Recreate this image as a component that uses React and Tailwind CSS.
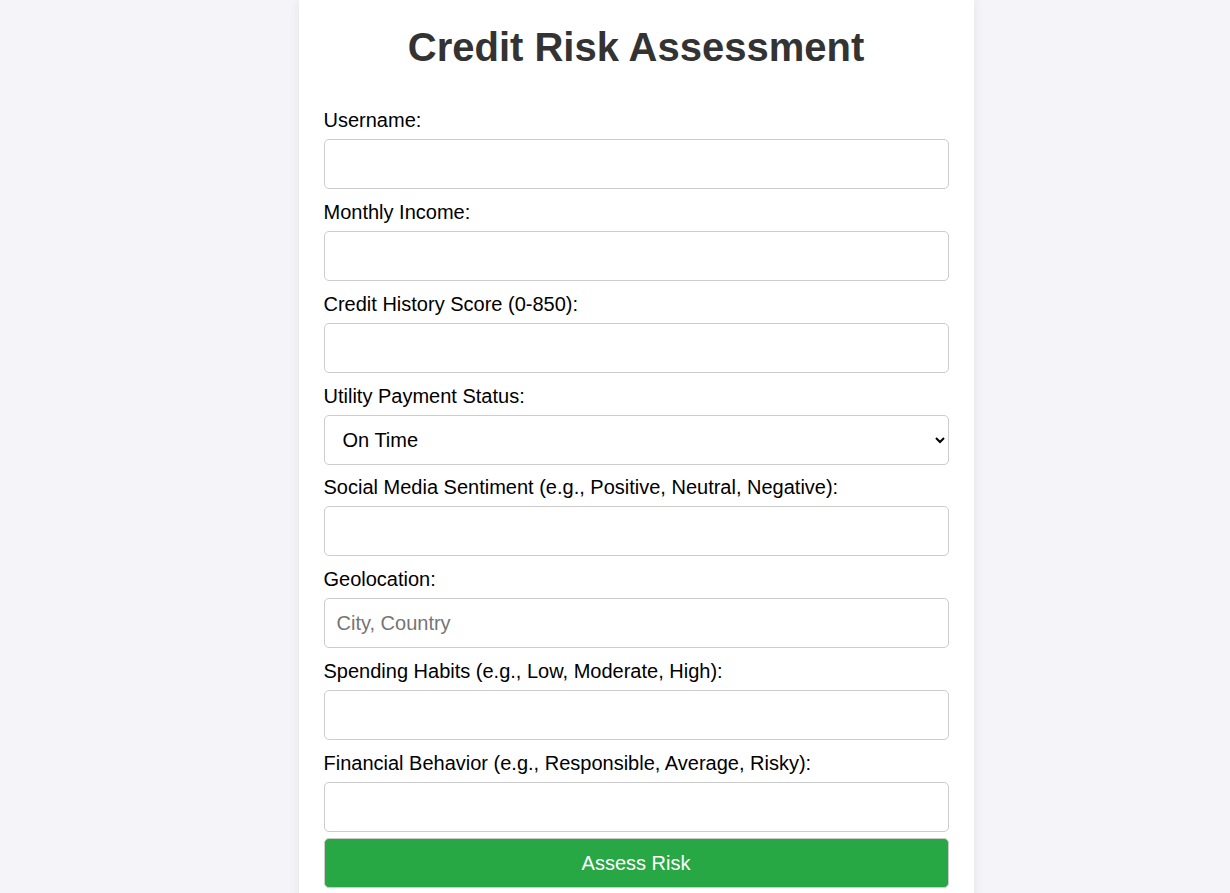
import React, { useState } from "react";

const fields = [
  { id: "username", label: "Username:", type: "text" },
  { id: "income", label: "Monthly Income:", type: "number" },
  { id: "score", label: "Credit History Score (0-850):", type: "number" },
  { id: "utility", label: "Utility Payment Status:", type: "select" },
  { id: "sentiment", label: "Social Media Sentiment (e.g., Positive, Neutral, Negative):", type: "text" },
  { id: "geo", label: "Geolocation:", type: "text", placeholder: "City, Country" },
  { id: "spending", label: "Spending Habits (e.g., Low, Moderate, High):", type: "text" },
  { id: "behavior", label: "Financial Behavior (e.g., Responsible, Average, Risky):", type: "text" },
];

export default function App() {
  const [form, setForm] = useState({ utility: "On Time" });

  function handleChange(e) {
    setForm({ ...form, [e.target.name]: e.target.value });
  }

  return (
    <div
      className="min-h-screen bg-[#f4f4f9] flex justify-center pl-[42px]"
      style={{ fontFamily: "'Liberation Sans', Arial, sans-serif" }}
    >
      <div className="w-[675px] bg-white px-[25px] pt-[24px] pb-[20px] shadow-[0_0_10px_rgba(0,0,0,0.08)]">
        <h1 className="text-center text-[40px] leading-[46px] font-bold text-[#333] mb-[39px]">
          Credit Risk Assessment
        </h1>

        <form onSubmit={(e) => e.preventDefault()}>
          {fields.map((f, i) => (
            <div key={f.id} className={i === fields.length - 1 ? "mb-[6px]" : "mb-[11.85px]"}>
              <label htmlFor={f.id} className="block text-[20px] leading-[23px] text-black mb-[7px]">
                {f.label}
              </label>
              {f.type === "select" ? (
                <select
                  id={f.id}
                  name={f.id}
                  value={form.utility}
                  onChange={handleChange}
                  className="block w-full h-[50px] px-[14px] text-[20px] text-black bg-white border border-[#ccc] rounded-[5px]"
                >
                  <option>On Time</option>
                  <option>Late</option>
                  <option>Missed</option>
                </select>
              ) : (
                <input
                  id={f.id}
                  name={f.id}
                  type={f.type}
                  placeholder={f.placeholder}
                  value={form[f.id] || ""}
                  onChange={handleChange}
                  className="block w-full h-[50px] px-[12px] text-[20px] text-black bg-white border border-[#ccc] rounded-[5px] placeholder:text-[#757575] outline-none"
                />
              )}
            </div>
          ))}
          <button
            type="submit"
            className="block w-full h-[50px] bg-[#28a745] text-white text-[20px] rounded-[5px] border border-[#ccc]"
          >
            Assess Risk
          </button>
        </form>
      </div>
    </div>
  );
}
